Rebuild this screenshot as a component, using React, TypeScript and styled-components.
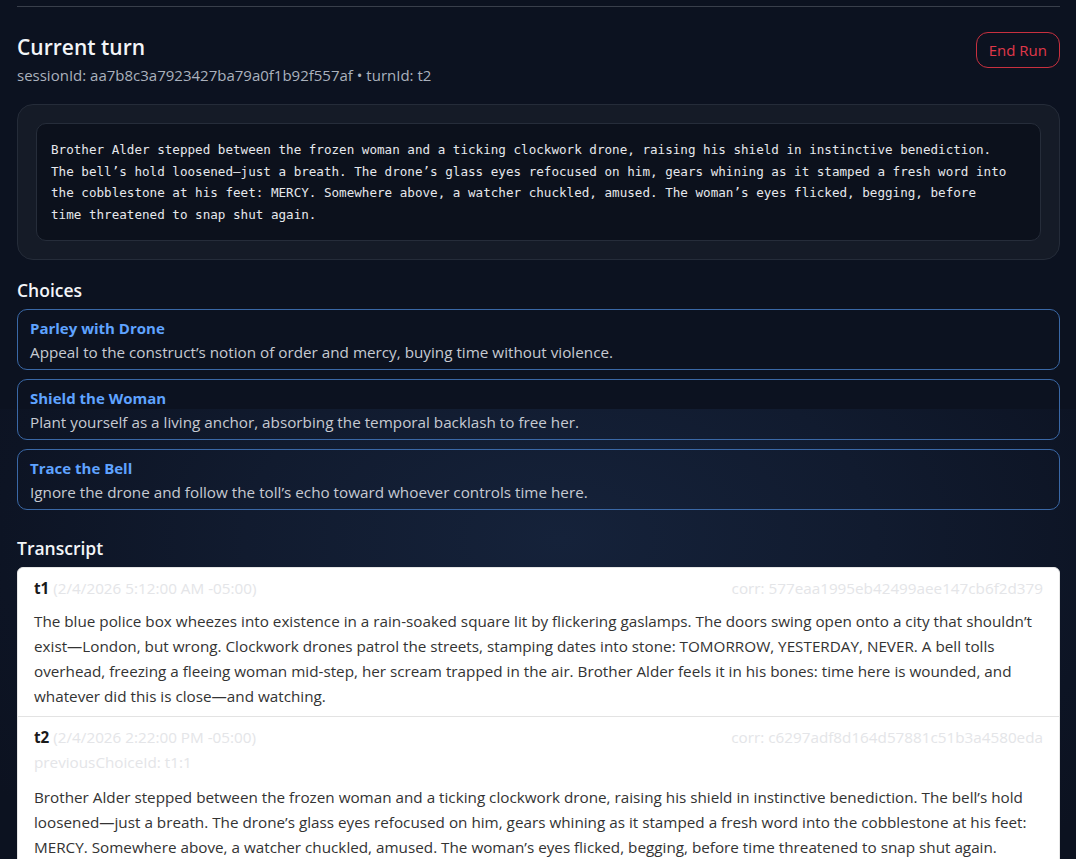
import styled, { createGlobalStyle } from 'styled-components';

const GlobalStyle = createGlobalStyle`
  html, body {
    margin: 0;
    background: #0c1220;
  }
  body {
    font-family: "Open Sans", "Noto Sans", sans-serif;
    color: #e8eaee;
  }
`;

const Page = styled.div`
  min-height: 100vh;
  padding: 6px 16px 0 17px;
  background:
    radial-gradient(ellipse 700px 420px at 560px 130px, #15223a 0%, #111b2f 45%, #0d1424 80%, #0c1220 100%) 0 409px / 100% 900px no-repeat,
    #0c1220;
`;

const Section = styled.section`
  border-top: 1px solid #393f4b;
  padding-top: 26px;
`;

const HeaderRow = styled.div`
  display: flex;
  justify-content: space-between;
  align-items: flex-start;
`;

const Title = styled.h2`
  margin: 0;
  font-size: 21px;
  font-weight: 600;
  line-height: 28px;
  color: #f3f5f8;
`;

const Meta = styled.div`
  margin-top: 4px;
  font-size: 15px;
  line-height: 20px;
  color: #aab1bd;
`;

const DangerButton = styled.button`
  margin-top: -1px;
  height: 36px;
  padding: 0 12px;
  border: 1px solid #c8303f;
  border-radius: 12px;
  background: transparent;
  color: #e0384a;
  font-family: inherit;
  font-size: 15px;
`;

const StoryPanel = styled.div`
  margin-top: 19px;
  padding: 18px 18px;
  background: #151b27;
  border: 1px solid #252c39;
  border-radius: 16px;
`;

const StoryText = styled.div`
  padding: 15px 30px 15px 14px;
  background: #0c111c;
  border: 1px solid #262d3a;
  border-radius: 10px;
  font-family: "DejaVu Sans Mono", "Liberation Mono", monospace;
  font-size: 12.6px;
  line-height: 21.6px;
  color: #e6e8ec;
  white-space: pre-wrap;
`;

const SectionTitle = styled.h3<{ $top: number }>`
  margin: ${(p) => p.$top}px 0 7px;
  font-size: 17.5px;
  font-weight: 600;
  line-height: 24px;
  color: #f3f5f8;
`;

const ChoiceList = styled.div`
  display: flex;
  flex-direction: column;
  gap: 9px;
`;

const ChoiceCard = styled.button`
  display: block;
  width: 100%;
  text-align: left;
  padding: 8px 12px 5px;
  background: transparent;
  border: 1px solid #3a68a6;
  border-radius: 10px;
  font-family: inherit;
  cursor: pointer;
`;

const ChoiceName = styled.div`
  font-size: 15px;
  font-weight: 700;
  line-height: 20px;
  color: #5fa3ff;
`;

const ChoiceDesc = styled.div`
  margin-top: 2px;
  font-size: 15.25px;
  line-height: 24px;
  color: #c6cad2;
`;

const TranscriptCard = styled.div`
  background: #ffffff;
  border-radius: 6px;
  border: 1px solid #e6e6e6;
  color: #333;
`;

const Entry = styled.div`
  padding: 10px 16px 7px;
  & + & {
    border-top: 1px solid #e3e3e3;
  }
`;

const EntryHead = styled.div`
  display: flex;
  justify-content: space-between;
  font-size: 15.25px;
  line-height: 20px;
`;

const TurnId = styled.span`
  font-weight: 700;
  color: #1a1a1a;
`;

const Faint = styled.span`
  color: #e4e5e8;
`;

const PrevChoice = styled.div`
  margin-top: 3px;
  font-size: 15.25px;
  line-height: 24px;
  color: #e4e5e8;
`;

const EntryBody = styled.p`
  margin: 11px 0 0;
  font-size: 15.25px;
  line-height: 25px;
  color: #333;
`;

const story =
  'Brother Alder stepped between the frozen woman and a ticking clockwork drone, raising his shield in instinctive benediction. The bell’s hold loosened—just a breath. The drone’s glass eyes refocused on him, gears whining as it stamped a fresh word into the cobblestone at his feet: MERCY. Somewhere above, a watcher chuckled, amused. The woman’s eyes flicked, begging, before time threatened to snap shut again.';

const choices = [
  { title: 'Parley with Drone', desc: 'Appeal to the construct’s notion of order and mercy, buying time without violence.' },
  { title: 'Shield the Woman', desc: 'Plant yourself as a living anchor, absorbing the temporal backlash to free her.' },
  { title: 'Trace the Bell', desc: 'Ignore the drone and follow the toll’s echo toward whoever controls time here.' },
];

const transcript = [
  {
    id: 't1',
    at: '(2/4/2026 5:12:00 AM -05:00)',
    corr: 'corr: 577eaa1995eb42499aee147cb6f2d379',
    prev: '',
    text: 'The blue police box wheezes into existence in a rain-soaked square lit by flickering gaslamps. The doors swing open onto a city that shouldn’t exist—London, but wrong. Clockwork drones patrol the streets, stamping dates into stone: TOMORROW, YESTERDAY, NEVER. A bell tolls overhead, freezing a fleeing woman mid-step, her scream trapped in the air. Brother Alder feels it in his bones: time here is wounded, and whatever did this is close—and watching.',
  },
  {
    id: 't2',
    at: '(2/4/2026 2:22:00 PM -05:00)',
    corr: 'corr: c6297adf8d164d57881c51b3a4580eda',
    prev: 'previousChoiceId: t1:1',
    text: story,
  },
];

const App = () => {
  return (
    <>
      <GlobalStyle />
      <Page>
        <Section>
          <HeaderRow>
            <div>
              <Title>Current turn</Title>
              <Meta>sessionId: aa7b8c3a7923427ba79a0f1b92f557af • turnId: t2</Meta>
            </div>
            <DangerButton>End Run</DangerButton>
          </HeaderRow>

          <StoryPanel>
            <StoryText>{story}</StoryText>
          </StoryPanel>

          <SectionTitle $top={18}>Choices</SectionTitle>
          <ChoiceList>
            {choices.map((c) => (
              <ChoiceCard key={c.title}>
                <ChoiceName>{c.title}</ChoiceName>
                <ChoiceDesc>{c.desc}</ChoiceDesc>
              </ChoiceCard>
            ))}
          </ChoiceList>

          <SectionTitle $top={26}>Transcript</SectionTitle>
          <TranscriptCard>
            {transcript.map((t) => (
              <Entry key={t.id}>
                <EntryHead>
                  <span>
                    <TurnId>{t.id}</TurnId> <Faint>{t.at}</Faint>
                  </span>
                  <Faint>{t.corr}</Faint>
                </EntryHead>
                {t.prev && <PrevChoice>{t.prev}</PrevChoice>}
                <EntryBody>{t.text}</EntryBody>
              </Entry>
            ))}
          </TranscriptCard>
        </Section>
      </Page>
    </>
  );
};

export default App;
